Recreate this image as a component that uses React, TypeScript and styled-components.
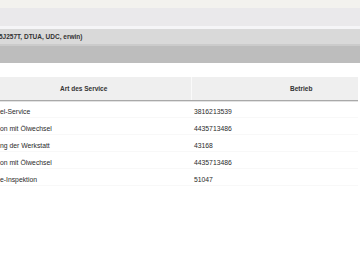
import React from "react";
import { styled, createGlobalStyle } from "styled-components";

const Global = createGlobalStyle`
  body {
    margin: 0;
    background: #ffffff;
    font-family: "Liberation Sans", Arial, sans-serif;
    color: #222;
  }
`;

const Page = styled.div`
  width: 360px;
  height: 270px;
  overflow: hidden;
  display: flex;
  flex-direction: column;
`;

const TopStrip = styled.div`
  height: 8px;
  background-color: #f3f2ee;
`;

const NavBar = styled.div`
  height: 18px;
  background-color: #eae9eb;
  border-bottom: 3px solid #f5f5f7;
`;

const TitleBar = styled.div`
  height: 15px;
  background-color: #d9d9d9;
  border-bottom: 2px solid #cbcbcb;
  display: flex;
  align-items: center;
  font-size: 6.5px;
  font-weight: bold;
  color: #333;
  /* text is scrolled out on the left */
  text-indent: -1px;
`;

const GrayBand = styled.div`
  height: 17px;
  background-color: #bdbdbd;
`;

const TableWrap = styled.div`
  margin-top: 14px;
  width: 358px;
`;

const HeaderRow = styled.div`
  display: grid;
  grid-template-columns: 191px 1fr;
  height: 23px;
  background-color: #efefef;
  border-bottom: 1px solid #a9a9a9;
  box-shadow: 0 1px 0 #e2e2e2;
`;

const HeaderCell = styled.div<{ $pad: number; $sep?: boolean }>`
  display: flex;
  align-items: center;
  padding-left: ${(p) => p.$pad}px;
  font-size: 6.5px;
  font-weight: bold;
  color: #333;
  border-left: ${(p) => (p.$sep ? "1px solid #fafafa" : "none")};
`;

const Row = styled.div`
  display: grid;
  grid-template-columns: 191px 1fr;
  height: 16px;
  border-bottom: 1px solid #f8f8f8;
  font-size: 6.8px;
  color: #2a2a2a;
`;

const Cell = styled.div<{ $pad: number }>`
  display: flex;
  align-items: center;
  padding-left: ${(p) => p.$pad}px;
  padding-top: 4px;
  white-space: nowrap;
  overflow: hidden;
`;

const rows = [
  ["el-Service", "3816213539"],
  ["on mit Ölwechsel", "4435713486"],
  ["ng der Werkstatt", "43168"],
  ["on mit Ölwechsel", "4435713486"],
  ["e-Inspektion", "51047"],
];

const App: React.FC = () => {
  return (
    <Page>
      <Global />
      <TopStrip />
      <NavBar />
      <TitleBar>5J257T, DTUA, UDC, erwin)</TitleBar>
      <GrayBand />
      <TableWrap>
        <HeaderRow>
          <HeaderCell $pad={60}>Art des Service</HeaderCell>
          <HeaderCell $pad={98} $sep>
            Betrieb
          </HeaderCell>
        </HeaderRow>
        {rows.map(([service, betrieb], i) => (
          <Row key={i}>
            <Cell $pad={0}>{service}</Cell>
            <Cell $pad={3}>{betrieb}</Cell>
          </Row>
        ))}
      </TableWrap>
    </Page>
  );
};

export default App;
